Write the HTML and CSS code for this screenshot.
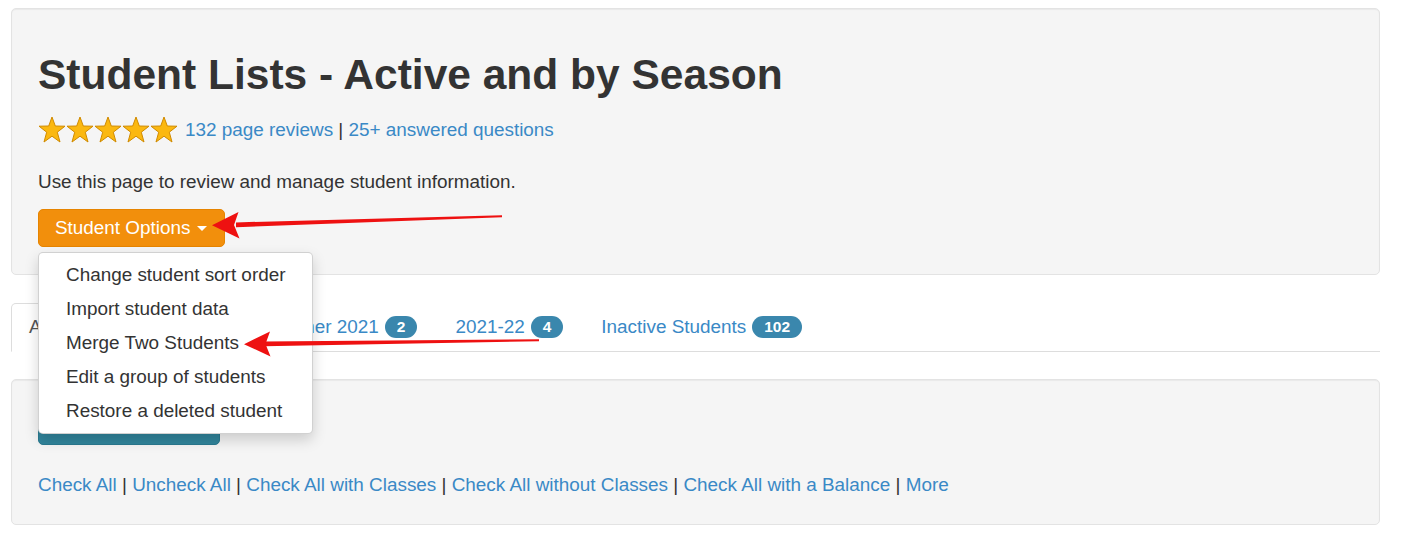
FILE: index.html
```html
<!DOCTYPE html>
<html lang="en">
<head>
<meta charset="utf-8">
<title>Student Lists - Active and by Season</title>
<link rel="stylesheet" href="styles.css">
</head>
<body>
<div class="page">
  <div class="well top-well">
    <h1 class="title">Student Lists - Active and by Season</h1>
    <div class="rating">
      <span class="stars">
        <svg class="star" viewBox="0 0 28 27"><polygon points="14,1 17.3,10 27,10.2 19.3,16.2 22,26 14,20.2 6,26 8.7,16.2 1,10.2 10.7,10"/></svg>
        <svg class="star" viewBox="0 0 28 27"><polygon points="14,1 17.3,10 27,10.2 19.3,16.2 22,26 14,20.2 6,26 8.7,16.2 1,10.2 10.7,10"/></svg>
        <svg class="star" viewBox="0 0 28 27"><polygon points="14,1 17.3,10 27,10.2 19.3,16.2 22,26 14,20.2 6,26 8.7,16.2 1,10.2 10.7,10"/></svg>
        <svg class="star" viewBox="0 0 28 27"><polygon points="14,1 17.3,10 27,10.2 19.3,16.2 22,26 14,20.2 6,26 8.7,16.2 1,10.2 10.7,10"/></svg>
        <svg class="star" viewBox="0 0 28 27"><polygon points="14,1 17.3,10 27,10.2 19.3,16.2 22,26 14,20.2 6,26 8.7,16.2 1,10.2 10.7,10"/></svg>
      </span>
      <span class="rating-links"><a href="#">132 page reviews</a> | <a href="#">25+ answered questions</a></span>
    </div>
    <p class="intro">Use this page to review and manage student information.</p>
    <div class="dropdown">
      <button class="btn btn-orange" type="button">Student Options<span class="caret"></span></button>
      <ul class="dropdown-menu">
        <li><a href="#">Change student sort order</a></li>
        <li><a href="#">Import student data</a></li>
        <li><a href="#">Merge Two Students</a></li>
        <li><a href="#">Edit a group of students</a></li>
        <li><a href="#">Restore a deleted student</a></li>
      </ul>
    </div>
  </div>

  <ul class="nav-tabs">
    <li class="active"><a href="#">All Active Students<span class="badge">6</span></a></li>
    <li><a href="#">Summer 2021<span class="badge">2</span></a></li>
    <li><a href="#">2021-22<span class="badge">4</span></a></li>
    <li><a href="#">Inactive Students<span class="badge">102</span></a></li>
  </ul>

  <div class="well bottom-well">
    <button class="btn btn-teal" type="button">Email Students</button>
    <p class="check-links"><a href="#">Check All</a> | <a href="#">Uncheck All</a> | <a href="#">Check All with Classes</a> | <a href="#">Check All without Classes</a> | <a href="#">Check All with a Balance</a> | <a href="#">More</a></p>
  </div>

  <svg class="annotations" width="1401" height="534" viewBox="0 0 1401 534">
    <polygon class="arrow" points="502,215.3 502,217.2 236,227.2 236,222.4"/>
    <polygon class="arrow" points="212,225.3 238.5,212 234,225 239.5,238.5"/>
    <polygon class="arrow" points="539,339.2 539,341.2 264,346.3 264,341.6"/>
    <polygon class="arrow" points="244,344.2 270,331.5 265.5,344 270.5,356.5"/>
  </svg>
</div>
</body>
</html>
```

FILE: styles.css
```css
* {
  box-sizing: border-box;
}

html, body {
  margin: 0;
  padding: 0;
  background: #ffffff;
}

body {
  font-family: "Liberation Sans", Arial, sans-serif;
  font-size: 18.9px;
  line-height: 26px;
  color: #333333;
}

a {
  color: #3a89c6;
  text-decoration: none;
}

.page {
  position: relative;
  width: 1401px;
  height: 534px;
  padding: 8px 21px 0 11px;
  overflow: hidden;
}

.well {
  background: #f5f5f5;
  border: 1px solid #e3e3e3;
  border-radius: 5px;
  box-shadow: inset 0 1px 1px rgba(0, 0, 0, 0.05);
  padding: 24px 26px;
}

.top-well {
  padding-bottom: 27px;
}

.title {
  margin: 17px 0 0;
  font-size: 42.5px;
  line-height: 50px;
  font-weight: bold;
  color: #333333;
}

.rating {
  display: flex;
  align-items: center;
  height: 27px;
  margin-top: 16px;
}

.stars {
  display: flex;
  margin-right: 7px;
}

.star {
  width: 28px;
  height: 27px;
  display: block;
}

.star polygon {
  fill: #fbb810;
  stroke: #d08a00;
  stroke-width: 1;
  stroke-linejoin: round;
}

.intro {
  margin: 26px 0 0;
}

.dropdown {
  position: relative;
  margin-top: 14px;
  width: max-content;
}

.btn {
  display: inline-flex;
  align-items: center;
  font-family: inherit;
  font-size: 18.9px;
  line-height: 26px;
  height: 38px;
  padding: 0 17px 0 16px;
  border: 1px solid transparent;
  border-radius: 5px;
  color: #ffffff;
  cursor: pointer;
}

.btn-orange {
  background: #f28f0c;
  border-color: #e68400;
}

.caret {
  display: inline-block;
  width: 0;
  height: 0;
  margin-left: 7px;
  border-top: 5px solid #ffffff;
  border-left: 5px solid transparent;
  border-right: 5px solid transparent;
}

.dropdown-menu {
  position: absolute;
  top: 43px;
  left: 0;
  z-index: 10;
  width: 275px;
  margin: 0;
  padding: 5px 0;
  list-style: none;
  background: #ffffff;
  border: 1px solid rgba(0, 0, 0, 0.18);
  border-radius: 5px;
  box-shadow: 0 6px 14px rgba(0, 0, 0, 0.17);
}

.dropdown-menu a {
  display: block;
  padding: 4px 26px 4px 27px;
  line-height: 26px;
  color: #333333;
  white-space: nowrap;
}

.nav-tabs {
  display: flex;
  margin: 28px 0 0;
  padding: 0;
  list-style: none;
  border-bottom: 1px solid #dddddd;
}

.nav-tabs li {
  margin-bottom: -1px;
  margin-right: 2px;
}

.nav-tabs a {
  display: flex;
  align-items: center;
  padding: 10px 17px 11px;
  line-height: 26px;
  border: 1px solid transparent;
  border-radius: 5px 5px 0 0;
  color: #3a89c6;
}

.nav-tabs .active a {
  padding-right: 15px;
  background: #ffffff;
  border-color: #dddddd #dddddd transparent;
  color: #555555;
}

.badge {
  display: inline-block;
  margin-left: 6px;
  height: 22px;
  padding: 0 12px;
  border-radius: 11px;
  background: #3a87ad;
  color: #ffffff;
  font-size: 15.5px;
  font-weight: bold;
  line-height: 22px;
}

.bottom-well {
  margin-top: 27px;
  padding-bottom: 26px;
}

.btn-teal {
  margin-top: 3px;
  width: 182px;
  justify-content: center;
  background: #31859c;
  border-color: #2a7a90;
}

.check-links {
  margin: 27px 0 0;
}

.annotations {
  position: absolute;
  top: 0;
  left: 0;
  z-index: 20;
  pointer-events: none;
}

.arrow {
  fill: #ee1111;
}
```
